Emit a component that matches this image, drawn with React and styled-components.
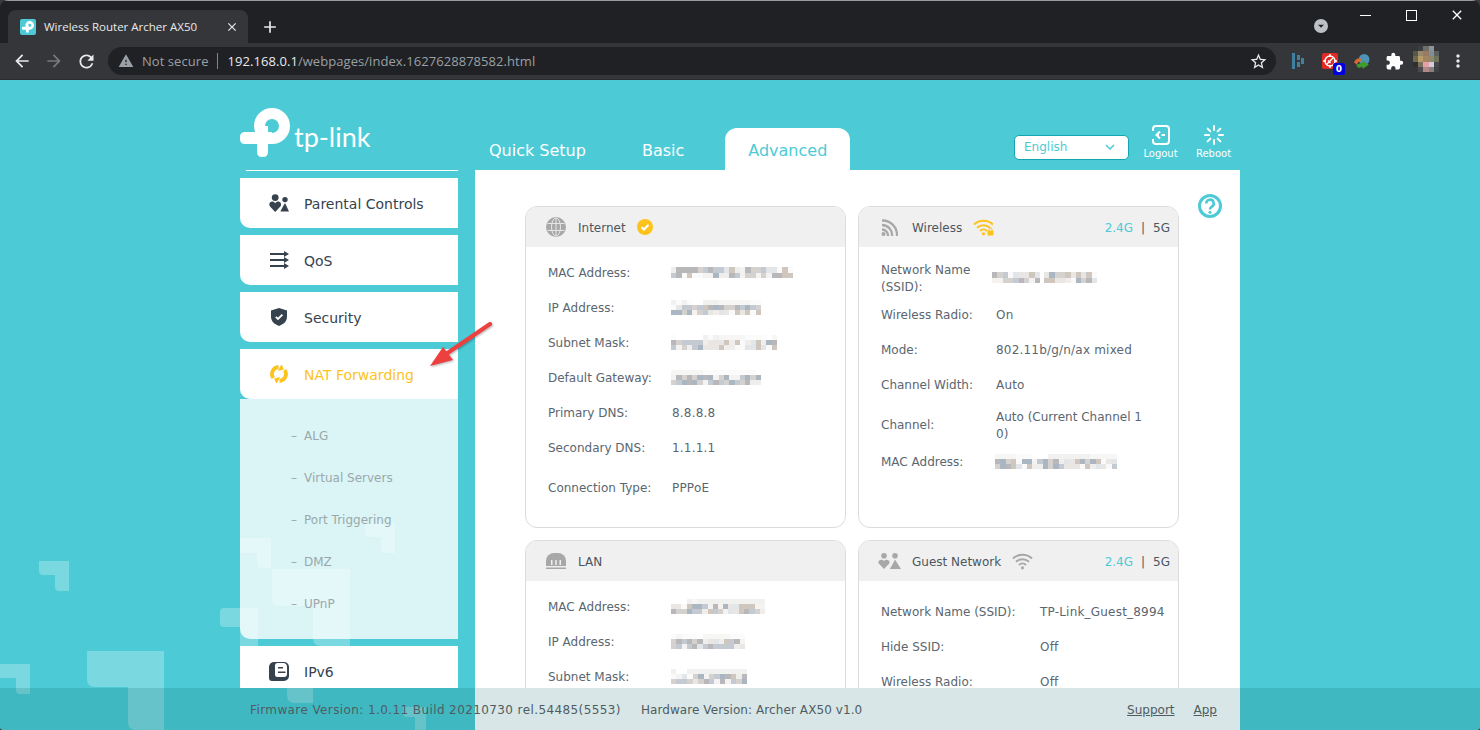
import styled, { createGlobalStyle } from "styled-components";
import { MdArrowBack, MdArrowForward, MdRefresh, MdStarBorder, MdMoreVert, MdWarning, MdClose, MdAdd, MdExtension, MdKeyboardArrowDown, MdArrowDropDown } from "react-icons/md";

const GlobalStyle = createGlobalStyle`
html, body { margin: 0; padding: 0; background: #3a3a3a; }
* { box-sizing: border-box; }
`;

const TEAL = "#4ccbd6";
const UI_FONT = `"Open Sans", "Noto Sans", sans-serif`;
const PAGE_FONT = `"DejaVu Sans", Verdana, sans-serif`;

// the pale mosaic that hides private values
const PALETTE = ["#f4f3f2", "#e9e6e3", "#d5d1ce", "#fafafa", "#c3cad1", "#e3e6e9", "#b8b8bb", "#f0eeec", "#aab6c2", "#cfc6be"];
const PALE = ["#ffffff", "#fbfbfb", "#f6f6f5", "#f1f1f0"];

const Mosaic = ({ width, seed, rows = 2 }) => {
  const cols = Math.round(width / 5.33);
  const cells = [];
  let n = seed * 7919 + 13;
  for (let i = 0; i < cols * rows; i++) {
    n = (n * 1103515245 + 12345) % 2147483648;
    const list = rows === 3 && i < cols ? PALE : PALETTE;
    cells.push(list[(n >> 8) % list.length]);
  }
  return (
    <MosaicGrid $cols={cols} $rows={rows} style={{ width }}>
      {cells.map((c, i) => <MosaicCell key={i} style={{ background: c }} />)}
    </MosaicGrid>
  );
};

const AVATAR = [
  "#35363a", "#3d3e41", "#6f6f6a", "#8a9499", "#35363a",
  "#58574c", "#9b8a6a", "#9a7a62", "#7f8f98", "#5b5f60",
  "#6d6a50", "#b79c6a", "#a08560", "#8d8a6a", "#6f705e",
  "#2e2f2e", "#7d6f60", "#e5a0a8", "#d4cbe0", "#45474a",
  "#35363a", "#4a4a4c", "#b08a88", "#8a7f80", "#3f4145",
];

const LogoMark = ({ size, color }) => (
  <svg width={size} height={size} viewBox="240 109 50 50">
    <g fill={color}>
      <path d="M245 133H272V145H245Q240 145 240 140V138Q240 133 245 133Z" />
      <path d="M257 127V153Q257 158 262 158H263Q268 158 268 153V127Z" />
    </g>
    <circle cx="272" cy="127" r="12.500" fill="none" stroke={color} strokeWidth="11" />
  </svg>
);

const ParentIcon = ({ color, width = 20, height = 18 }) => (
  <svg width={width} height={height} viewBox="0 0 20 18" fill={color}>
    <circle cx="6.200" cy="3.600" r="3.400" />
    <circle cx="16" cy="5.600" r="2.700" />
    <path d="M6.200 18L.8 12.200C-1.200 8.600 3.600 5.600 6.200 9.200 8.800 5.600 13.600 8.600 11.600 12.200Z" />
    <path d="M16 9L20 17.500H11.400L13.400 13.400Z" />
  </svg>
);

const QosIcon = () => (
  <svg width="19" height="18" viewBox="0 0 19 18" fill="#36434f">
    <path d="M0 2h14V0l5 3-5 3V4H0zM0 8h14V6l5 3-5 3v-2H0zM0 14h14v-2l5 3-5 3v-2H0z" />
  </svg>
);

const ShieldIcon = () => (
  <svg width="16" height="18" viewBox="0 0 16 18">
    <path d="M8 0L16 2.500V9C16 13.500 12 16.500 8 18 4 16.500 0 13.500 0 9V2.500Z" fill="#36434f" />
    <path d="M4.800 8.800L7 11 11.400 6.600" fill="none" stroke="#fff" strokeWidth="1.800" />
  </svg>
);

const NatIcon = () => (
  <svg width="18" height="18" viewBox="0 0 18 18" fill="none" stroke="#fdc31c" strokeWidth="3.800">
    <path d="M3.300 13A7 7 0 0 1 8.500 2" />
    <path d="M14.700 5A7 7 0 0 1 9.500 16" />
    <path d="M11.500 .5L13 4 9 5Z" fill="#fdc31c" strokeWidth="1.200" />
    <path d="M6.500 17.500L5 14 9 13Z" fill="#fdc31c" strokeWidth="1.200" />
  </svg>
);

const DocIcon = () => (
  <svg width="20" height="20" viewBox="0 0 20 20">
    <path d="M5 1H15A5 5 0 0 1 20 6V15A5 5 0 0 1 15 20H3A3 3 0 0 1 0 17V6A5 5 0 0 1 5 1Z" fill="#36434f" />
    <path d="M8.500 2H14A4 4 0 0 1 18 6V13A3 3 0 0 1 15 16H8.500A2.500 2.500 0 0 1 6 13.500V4.500A2.500 2.500 0 0 1 8.500 2Z" fill="#fff" />
    <path d="M9 6h5v1.600H9zM9 10.500h7.500v1.600H9z" fill="#36434f" />
  </svg>
);

const GlobeIcon = () => (
  <svg width="20" height="20" viewBox="0 0 20 20">
    <circle cx="10" cy="10" r="10" fill="#a8a8a8" />
    <g fill="none" stroke="#e6e6e6" strokeWidth="1">
      <ellipse cx="10" cy="10" rx="4.500" ry="9" />
      <path d="M10 1V19M1.500 6.500H18.500M1.500 13.500H18.500" />
    </g>
  </svg>
);

const SignalIcon = () => (
  <svg width="17" height="17" viewBox="0 0 17 17" fill="none" stroke="#a8a8a8" strokeWidth="2.300">
    <path d="M1 1.500A14.500 14.500 0 0 1 16 17" />
    <path d="M1 6A10 10 0 0 1 11 17" />
    <path d="M1 10.500A6 6 0 0 1 7 17" />
    <circle cx="2.500" cy="15" r="2" fill="#a8a8a8" stroke="none" />
  </svg>
);

const CheckBadge = () => (
  <svg width="16" height="16" viewBox="0 0 16 16">
    <circle cx="8" cy="8" r="8" fill="#fdc31c" />
    <path d="M4.500 8.200L7 10.500 11.500 5.800" fill="none" stroke="#fff" strokeWidth="2" />
  </svg>
);

const WifiIcon = ({ color, lock }) => (
  <svg width="21" height="18" viewBox="0 0 21 18" fill="none" stroke={color} strokeWidth="2">
    <path d="M1 6.500A14 14 0 0 1 20 6.500" />
    <path d="M4 9.800A9.500 9.500 0 0 1 17 9.800" />
    <path d="M7 13A5 5 0 0 1 14 13" />
    <circle cx="10.500" cy="15.800" r="1.600" fill={color} stroke="none" />
    {lock && <rect x="14.500" y="12.500" width="6" height="5" rx="0.800" fill={color} stroke="none" />}
    {lock && <path d="M16 12.800V11.500A1.500 1.500 0 0 1 19 11.500V12.800" strokeWidth="1" />}
  </svg>
);

const LanIcon = () => (
  <svg width="20" height="16" viewBox="0 0 20 16">
    <path d="M0 13V8A8 8 0 0 1 8 0H12A8 8 0 0 1 20 8V13Z" fill="#a8a8a8" />
    <path d="M5 7h1.500v5H5zM9.200 7h1.500v5H9.200zM13.500 7H15v5h-1.500z" fill="#f0f0f0" />
    <path d="M0 14.500h20V16H0z" fill="#a8a8a8" />
  </svg>
);

const GuestIcon = () => (
  <svg width="23" height="16" viewBox="0 0 23 16" fill="#a8a8a8">
    <circle cx="6" cy="2.800" r="2.800" />
    <circle cx="17" cy="2.800" r="2.800" />
    <path d="M6 16L.8 10.500C-1 7.500 3.600 5 6 8 8.400 5 13 7.500 11.200 10.500Z" />
    <path d="M17 6.500L23 16H11.800L14 12.300Z" />
  </svg>
);

const HelpIcon = () => (
  <svg width="24" height="24" viewBox="0 0 24 24" fill="none" stroke={TEAL} strokeWidth="3">
    <circle cx="12" cy="12" r="10.500" />
    <path d="M8.300 9.500A3.700 3.700 0 1 1 13.800 12.600C12.500 13.300 12 14 12 15.500" strokeWidth="2.600" />
    <circle cx="12" cy="18.200" r="1.500" fill={TEAL} stroke="none" />
  </svg>
);

const LogoutIcon = () => (
  <svg width="18" height="20" viewBox="0 0 18 20" fill="none" stroke="#fff" strokeWidth="2">
    <path d="M1 6V4A3 3 0 0 1 4 1H14A3 3 0 0 1 17 4V16A3 3 0 0 1 14 19H4A3 3 0 0 1 1 16V14" />
    <path d="M8 6.500L4.500 10 8 13.500M5 10H7M9.500 10H13" />
  </svg>
);

const RebootIcon = () => (
  <svg width="20" height="20" viewBox="0 0 20 20" stroke="#fff" strokeWidth="2" strokeLinecap="round">
    <path d="M10 1V5M10 15V19M1 10H5M15 10H19M3.600 3.600L6.400 6.400M13.600 13.600L16.400 16.400M3.600 16.400L6.400 13.600M13.600 6.400L16.400 3.600" />
  </svg>
);

const menu = [
  { name: "Parental Controls", icon: <ParentIcon color="#36434f" /> },
  { name: "QoS", icon: <QosIcon /> },
  { name: "Security", icon: <ShieldIcon /> },
];
const subMenu = ["ALG", "Virtual Servers", "Port Triggering", "DMZ", "UPnP"];

const App = () => {
  return (
    <Frame>
      <GlobalStyle />
      <TabStrip>
        <Tab>
          <Favicon><LogoMark size={12} color="#fff" /></Favicon>
          <TabTitle>Wireless Router Archer AX50</TabTitle>
          <MdClose size={14} color="#e8eaed" />
        </Tab>
        <NewTab><MdAdd size={20} /></NewTab>
        <ProfileDrop><MdArrowDropDown size={16} color="#202124" /></ProfileDrop>
        <WinButtons>
          <WinSlot><WinMin /></WinSlot>
          <WinSlot><WinMax /></WinSlot>
          <WinSlot><MdClose size={16} color="#fff" /></WinSlot>
        </WinButtons>
      </TabStrip>
      <Toolbar>
        <NavButtons>
          <Slot><MdArrowBack size={20} color="#e8eaed" /></Slot>
          <Slot><MdArrowForward size={20} color="#787a7e" /></Slot>
          <Slot><MdRefresh size={21} color="#e8eaed" /></Slot>
        </NavButtons>
        <Omnibox>
          <MdWarning size={16} color="#9aa0a6" />
          <NotSecure>Not secure</NotSecure>
          <OmniDivider />
          <Url><b>192.168.0.1</b>/webpages/index.1627628878582.html</Url>
          <StarWrap><MdStarBorder size={19} color="#e8eaed" /></StarWrap>
        </Omnibox>
        <Extensions>
          <Slot>
            <svg width="12" height="16" viewBox="0 0 12 16" fill="#3f7f9f">
              <path d="M0 0h3v16H0zM5 2h3v5H5zM5 9h3v5H5zM9 5h3v6H9z" />
            </svg>
          </Slot>
          <Slot>
            <RedExt>
              <svg width="16" height="16" viewBox="0 0 16 16" fill="none" stroke="#fff" strokeWidth="1.400">
                <circle cx="8" cy="8" r="5" />
                <path d="M8 1V4M8 12V15M1 8H4M12 8H15M5 11L11 5M6 7.500L8.500 10" />
              </svg>
              <Badge>0</Badge>
            </RedExt>
          </Slot>
          <Slot>
            <svg width="17" height="17" viewBox="0 0 16 16">
              <circle cx="9.500" cy="6" r="5" fill="#4f93b8" />
              <path d="M0 9A6 6 0 0 1 6 5L7 8A3 3 0 0 0 3 11Z" fill="#d8692c" />
              <path d="M2 11L8 9V7L14 11 8 15V13L4 14Z" fill="#3f9a2f" />
            </svg>
          </Slot>
          <Slot><MdExtension size={19} color="#fff" /></Slot>
          <Slot>
            <AvatarGrid>
              {AVATAR.map((c, i) => <AvatarCell key={i} style={{ background: c }} />)}
            </AvatarGrid>
          </Slot>
          <Slot><MdMoreVert size={20} color="#e8eaed" /></Slot>
        </Extensions>
      </Toolbar>

      <Page>
        <Shapes width="1480" height="650" viewBox="0 80 1480 650" fill="#fff" fillOpacity="0.25">
          <path d="M39 561H69V591H59Q55 591 55 587V575H43Q39 575 39 571Z" />
          <path d="M0 664H30V694H20Q16 694 16 690V678H0Z" />
          <path d="M87 651H164V730H136Q128 730 128 722V687H95Q87 687 87 679Z" />
          <path d="M240 538H271V568H261Q257 568 257 564V553H240Z" />
          <path d="M272 569H350V646H321Q313 646 313 638V606H280Q272 606 272 598Z" />
          <path d="M224 608H258V646H240V627H224Q220 627 220 623V612Q220 608 224 608Z" />
          <path d="M365 523H395V553H385Q381 553 381 549V537H369Q365 537 365 533Z" />
          <path d="M287 646H313V703H295Q287 703 287 695Z" />
          <path d="M403 707H426V730H415V717H407Q403 717 403 713Z" />
        </Shapes>
        <Center>
          <Header>
            <LogoBox>
              <LogoMark size={50} color="#fff" />
              <LogoText>tp-link</LogoText>
            </LogoBox>
            <Tabs>
              <HeadTab $gap={56}>Quick Setup</HeadTab>
              <HeadTab $gap={41}>Basic</HeadTab>
              <HeadTab $active>Advanced</HeadTab>
            </Tabs>
            <HeadRight>
              <LangSelect>
                English
                <MdKeyboardArrowDown size={18} color={TEAL} />
              </LangSelect>
              <HeadAction>
                <LogoutIcon />
                <span>Logout</span>
              </HeadAction>
              <HeadAction>
                <RebootIcon />
                <span>Reboot</span>
              </HeadAction>
            </HeadRight>
          </Header>
          <Columns>
            <Sidebar>
              <SideLine />
              {menu.map((m) => (
                <MenuItem key={m.name}>
                  <MenuIcon>{m.icon}</MenuIcon>
                  {m.name}
                </MenuItem>
              ))}
              <Group>
                <MenuItem $active>
                  <MenuIcon><NatIcon /></MenuIcon>
                  NAT Forwarding
                </MenuItem>
                <SubMenu>
                  {subMenu.map((s) => (
                    <SubItem key={s}><Dash>–</Dash>{s}</SubItem>
                  ))}
                </SubMenu>
              </Group>
              <MenuItem>
                <MenuIcon><DocIcon /></MenuIcon>
                IPv6
              </MenuItem>
            </Sidebar>
            <Main>
              <HelpSpot><HelpIcon /></HelpSpot>
              <Cards>
                <Card>
                  <CardHead>
                    <HeadIconBox><GlobeIcon /></HeadIconBox>
                    <CardTitle>Internet</CardTitle>
                    <CheckBadge />
                  </CardHead>
                  <CardBody $top={8} $label={124}>
                    <Row><Label>MAC Address:</Label><Mosaic width={122} seed={1} /></Row>
                    <Row><Label>IP Address:</Label><Mosaic width={90} seed={2} rows={3} /></Row>
                    <Row><Label>Subnet Mask:</Label><Mosaic width={106} seed={3} rows={3} /></Row>
                    <Row><Label>Default Gateway:</Label><Mosaic width={90} seed={4} rows={3} /></Row>
                    <Row><Label>Primary DNS:</Label><Value>8.8.8.8</Value></Row>
                    <Row><Label>Secondary DNS:</Label><Value>1.1.1.1</Value></Row>
                    <Row $height={45}><Label>Connection Type:</Label><Value>PPPoE</Value></Row>
                  </CardBody>
                </Card>
                <Card>
                  <CardHead>
                    <HeadIconBox $right><SignalIcon /></HeadIconBox>
                    <CardTitle>Wireless</CardTitle>
                    <WifiIcon color="#fdc31c" lock />
                    <Bands><BandOn>2.4G</BandOn><BandBar>|</BandBar>5G</Bands>
                  </CardHead>
                  <CardBody $top={11} $label={115}>
                    <Row $height={39}>
                      <Label>Network Name (SSID):</Label>
                      <MosaicPair>
                        <Mosaic width={48} seed={5} />
                        <Mosaic width={53} seed={11} />
                      </MosaicPair>
                    </Row>
                    <Row><Label>Wireless Radio:</Label><Value>On</Value></Row>
                    <Row><Label>Mode:</Label><Value>802.11b/g/n/ax mixed</Value></Row>
                    <Row><Label>Channel Width:</Label><Value>Auto</Value></Row>
                    <Row $height={45}><Label>Channel:</Label><Value $tight>Auto (Current Channel 10)</Value></Row>
                    <Row $height={29}><Label>MAC Address:</Label><Mosaic width={122} seed={6} rows={3} /></Row>
                  </CardBody>
                </Card>
                <Card>
                  <CardHead>
                    <HeadIconBox><LanIcon /></HeadIconBox>
                    <CardTitle>LAN</CardTitle>
                  </CardHead>
                  <CardBody $top={8} $label={124}>
                    <Row><Label>MAC Address:</Label><Mosaic width={94} seed={7} rows={3} /></Row>
                    <Row><Label>IP Address:</Label><Mosaic width={74} seed={8} rows={3} /></Row>
                    <Row><Label>Subnet Mask:</Label><Mosaic width={76} seed={9} rows={3} /></Row>
                  </CardBody>
                </Card>
                <Card>
                  <CardHead>
                    <HeadIconBox $right><GuestIcon /></HeadIconBox>
                    <CardTitle>Guest Network</CardTitle>
                    <WifiIcon color="#a8a8a8" />
                    <Bands><BandOn>2.4G</BandOn><BandBar>|</BandBar>5G</Bands>
                  </CardHead>
                  <CardBody $top={13} $label={159}>
                    <Row><Label>Network Name (SSID):</Label><Value>TP-Link_Guest_8994</Value></Row>
                    <Row><Label>Hide SSID:</Label><Value>Off</Value></Row>
                    <Row><Label>Wireless Radio:</Label><Value>Off</Value></Row>
                  </CardBody>
                </Card>
              </Cards>
            </Main>
          </Columns>
        </Center>
        <Footer>
          <FooterInner>
            <FootText $spacing={0.4}>Firmware Version: 1.0.11 Build 20210730 rel.54485(5553)</FootText>
            <FootText $spacing={0.08}>Hardware Version: Archer AX50 v1.0</FootText>
            <FootLinks>
              <FootLink>Support</FootLink>
              <FootLink>App</FootLink>
            </FootLinks>
          </FooterInner>
        </Footer>
        <RedArrow width="64" height="48" viewBox="0 0 64 48">
          <path d="M61 3L17 33" stroke="#ef4040" strokeWidth="4" strokeLinecap="round" />
          <path d="M1 45L14 26 24 39Z" fill="#ef4040" />
        </RedArrow>
      </Page>
    </Frame>
  );
};

const Frame = styled.div`
width: 1480px;
height: 730px;
display: flex;
flex-direction: column;
overflow: hidden;
font-family: ${PAGE_FONT};
border-radius: 8px 8px 3px 3px;
`;

const TabStrip = styled.div`
height: 43px;
flex: none;
display: flex;
align-items: flex-end;
background: #202124;
border-top: 1px solid #9a9a9a;
padding-left: 8px;
position: relative;
`;

const Tab = styled.div`
width: 240px;
height: 33px;
display: flex;
align-items: center;
background: #35363a;
border-radius: 8px 8px 0 0;
padding: 0 9px 0 12px;
`;

const Favicon = styled.div`
width: 16px;
height: 16px;
background: ${TEAL};
border-radius: 2px;
display: flex;
align-items: center;
justify-content: center;
margin-right: 8px;
`;

const TabTitle = styled.div`
flex: 1;
font: 11.500px ${UI_FONT};
color: #e8eaed;
white-space: nowrap;
`;

const NewTab = styled.div`
width: 44px;
height: 33px;
display: flex;
align-items: center;
justify-content: center;
color: #e8eaed;
`;

const ProfileDrop = styled.div`
position: absolute;
left: 1314px;
top: 18px;
width: 14px;
height: 14px;
border-radius: 50%;
background: #bdc1c6;
display: flex;
align-items: center;
justify-content: center;
`;

const WinButtons = styled.div`
position: absolute;
top: 4px;
right: 0;
display: flex;
align-items: center;
height: 20px;
`;

const WinSlot = styled.div`
width: 46px;
display: flex;
justify-content: center;
`;

const WinMin = styled.div`
width: 11px;
height: 1px;
background: #fff;
`;

const WinMax = styled.div`
width: 11px;
height: 11px;
border: 1px solid #fff;
`;

const Toolbar = styled.div`
height: 37px;
flex: none;
display: flex;
align-items: center;
background: #35363a;
border-bottom: 1px solid #2a2b2e;
`;

const Slot = styled.div`
width: 32px;
display: flex;
align-items: center;
justify-content: center;
`;

const NavButtons = styled.div`
width: 108px;
display: flex;
align-items: center;
padding-left: 6px;
`;

const Omnibox = styled.div`
width: 1168px;
height: 28px;
border-radius: 14px;
background: #202124;
display: flex;
align-items: center;
padding-left: 10px;
font: 13px ${UI_FONT};
letter-spacing: 0.06px;
`;

const NotSecure = styled.span`
color: #9aa0a6;
margin-left: 8px;
`;

const OmniDivider = styled.div`
width: 1px;
height: 16px;
background: #80868b;
margin: 0 10px 0 8px;
`;

const Url = styled.div`
color: #9aa0a6;
flex: 1;
b {
  font-weight: 400;
  color: #e8eaed;
}
`;

const StarWrap = styled.div`
margin-right: 8px;
display: flex;
`;

const Extensions = styled.div`
flex: 1;
display: flex;
align-items: center;
padding-left: 6px;
`;

const RedExt = styled.div`
width: 16px;
height: 16px;
background: #e02a26;
border-radius: 2px;
position: relative;
`;

const Badge = styled.span`
position: absolute;
right: -7px;
bottom: -6px;
width: 12px;
height: 12px;
background: #0000e0;
color: #fff;
font: bold 9px/12px ${PAGE_FONT};
text-align: center;
border-radius: 2px;
`;

const AvatarGrid = styled.div`
width: 26px;
height: 26px;
margin-top: -4px;
display: grid;
grid-template-columns: repeat(5, 1fr);
grid-auto-rows: 1fr;
`;

const AvatarCell = styled.div``;

const Page = styled.div`
flex: 1;
min-height: 0;
display: flex;
flex-direction: column;
background: ${TEAL};
position: relative;
overflow: hidden;
`;

const Shapes = styled.svg`
position: absolute;
left: 0;
top: 0;
`;

const Center = styled.div`
width: 1000px;
margin: 0 auto;
flex: 1;
min-height: 0;
display: flex;
flex-direction: column;
position: relative;
`;

const Header = styled.div`
height: 90px;
flex: none;
display: flex;
`;

const LogoBox = styled.div`
width: 235px;
padding-top: 28px;
display: flex;
align-items: flex-start;
`;

const LogoText = styled.span`
font: 400 27px/30px Lato, sans-serif;
color: #fff;
margin: 14px 0 0 4px;
`;

const Tabs = styled.div`
display: flex;
align-items: flex-end;
padding-left: 14px;
`;

const HeadTab = styled.div`
height: 42px;
padding-top: 2px;
display: flex;
align-items: center;
justify-content: center;
font-size: 16px;
color: ${(p) => (p.$active ? TEAL : "#fff")};
background: ${(p) => (p.$active ? "#fff" : "transparent")};
width: ${(p) => (p.$active ? "125px" : "auto")};
margin-right: ${(p) => p.$gap || 0}px;
border-radius: 12px 12px 0 0;
`;

const HeadRight = styled.div`
margin-left: auto;
display: flex;
align-items: flex-start;
padding-top: 55px;
`;

const LangSelect = styled.div`
width: 115px;
height: 25px;
margin-right: 5px;
background: #fff;
border: 1px solid #13a6b2;
border-radius: 5px;
display: flex;
align-items: center;
justify-content: space-between;
padding: 0 9px 1px;
font-size: 12px;
color: ${TEAL};
`;

const HeadAction = styled.div`
width: 53px;
margin-top: -10px;
display: flex;
flex-direction: column;
align-items: center;
gap: 3px;
color: #fff;
font-size: 10px;
`;

const Columns = styled.div`
flex: 1;
min-height: 0;
display: flex;
`;

const Sidebar = styled.div`
width: 218px;
margin-right: 17px;
overflow: hidden;
display: flex;
flex-direction: column;
gap: 7px;
`;

const SideLine = styled.div`
height: 1px;
flex: none;
margin-left: 6px;
background: #fff;
`;

const Group = styled.div`
flex: none;
`;

const MenuItem = styled.div`
height: 50px;
flex: none;
display: flex;
align-items: center;
background: #fff;
border-radius: 0 0 0 10px;
font-size: 14px;
color: ${(p) => (p.$active ? "#fdc31c" : "#36434f")};
padding-top: 2px;
`;

const MenuIcon = styled.div`
width: 78px;
margin-right: -14px;
margin-top: -2px;
display: flex;
justify-content: center;
`;

const SubMenu = styled.div`
height: 240px;
padding-top: 15px;
background: rgba(255, 255, 255, 0.8);
border-radius: 0 0 0 10px;
`;

const SubItem = styled.div`
height: 42px;
display: flex;
align-items: center;
padding: 2px 0 0 51px;
font-size: 12px;
color: #9aa8aa;
`;

const Dash = styled.span`
width: 13px;
`;

const Main = styled.div`
flex: 1;
min-width: 0;
background: #fff;
position: relative;
overflow: hidden;
padding: 36px 61px 0 50px;
`;

const HelpSpot = styled.div`
position: absolute;
top: 24px;
right: 18px;
display: flex;
`;

const Cards = styled.div`
display: grid;
grid-template-columns: 1fr 1fr;
grid-auto-rows: 322px;
gap: 12px;
`;

const Card = styled.div`
border: 1px solid #dcdcdc;
border-radius: 12px;
overflow: hidden;
`;

const CardHead = styled.div`
height: 40px;
display: flex;
align-items: center;
background: #f0f0f0;
padding-right: 8px;
font-size: 12px;
color: #4c5660;
`;

const HeadIconBox = styled.div`
width: ${(p) => (p.$right ? 53 : 52)}px;
padding-left: 8px;
padding-right: ${(p) => (p.$right ? 1 : 0)}px;
display: flex;
justify-content: center;
`;

const CardTitle = styled.span`
margin-right: 11px;
padding-top: 2px;
`;

const Bands = styled.div`
margin-left: auto;
padding-top: 2px;
`;

const BandOn = styled.span`
color: ${TEAL};
`;

const BandBar = styled.span`
margin: 0 8px;
`;

const CardBody = styled.div`
padding: ${(p) => p.$top}px 10px 0 22px;
font-size: 12px;
color: #5a6670;
--label: ${(p) => p.$label}px;
`;

const Row = styled.div`
height: ${(p) => p.$height || 35}px;
display: grid;
grid-template-columns: var(--label) 1fr;
align-items: center;
`;

const Label = styled.div`
line-height: 17px;
padding: 2px 10px 0 0;
`;

const Value = styled.div`
line-height: 17px;
padding-top: 2px;
max-width: 158px;
word-break: break-all;
letter-spacing: ${(p) => (p.$tight ? 0 : 0.2)}px;
`;

const MosaicGrid = styled.div`
display: grid;
grid-template-columns: repeat(${(p) => p.$cols}, 1fr);
grid-auto-rows: 5.33px;
height: ${(p) => p.$rows * 5.33}px;
margin-left: -1px;
`;

const MosaicCell = styled.div``;

const MosaicPair = styled.div`
display: flex;
gap: 5px;
margin-left: -3px;
`;

const Footer = styled.div`
height: 42px;
flex: none;
background: rgba(0, 80, 80, 0.15);
position: relative;
`;

const FooterInner = styled.div`
width: 1000px;
height: 100%;
margin: 0 auto;
display: flex;
align-items: center;
gap: 20px;
padding: 2px 23px 0 10px;
background: linear-gradient(to right, transparent 235px, #d8e6e7 235px);
`;

const FootText = styled.span`
font-size: 12px;
letter-spacing: ${(p) => p.$spacing}px;
color: #4f5c62;
`;

const FootLinks = styled.div`
margin-left: auto;
display: flex;
gap: 19px;
`;

const FootLink = styled.span`
font-size: 12px;
color: #4f5c62;
text-decoration: underline;
`;

const RedArrow = styled.svg`
position: absolute;
left: 429px;
top: 241px;
filter: drop-shadow(1px 1px 1px rgba(0, 0, 0, 0.3));
`;

export default App;
